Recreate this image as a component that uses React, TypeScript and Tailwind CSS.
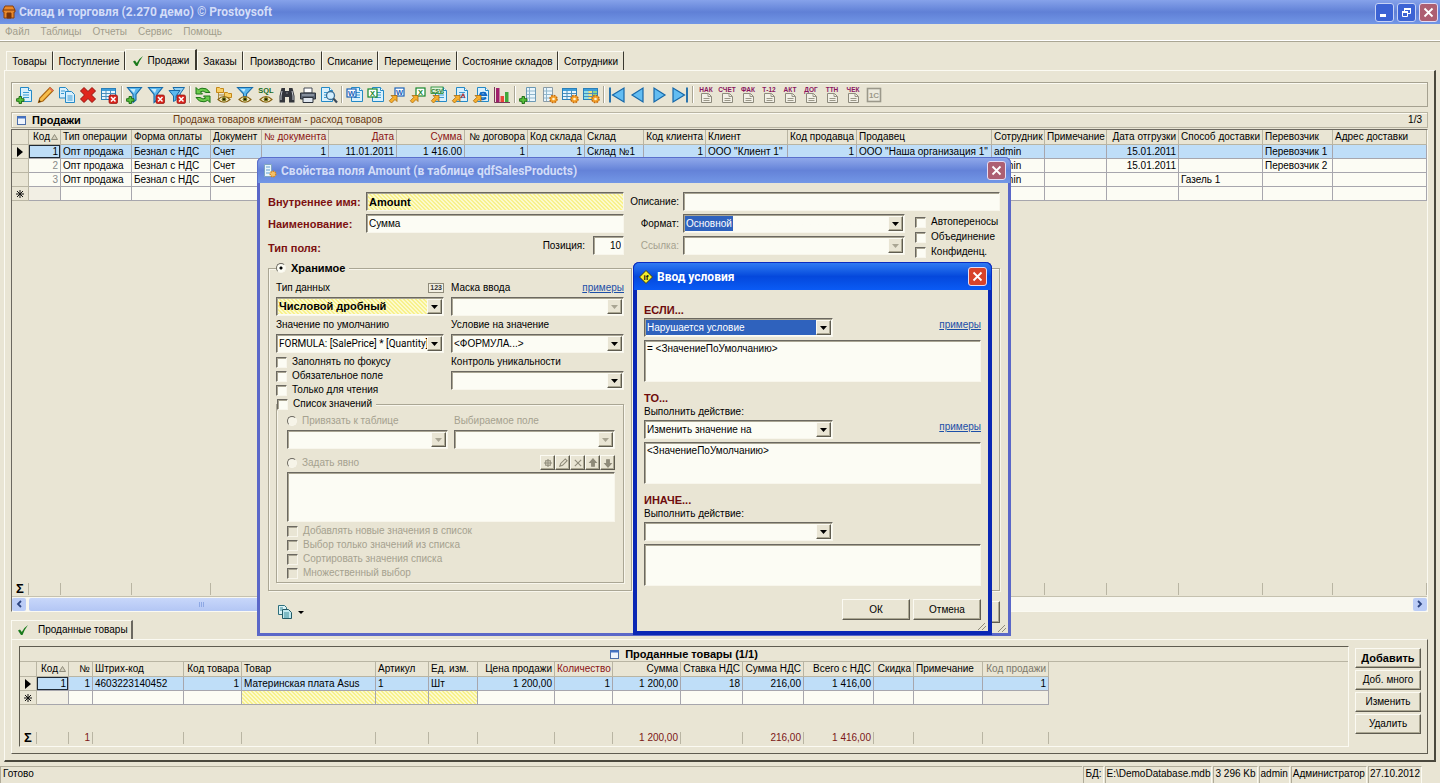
import { useId, useState } from 'react';
import type { ReactNode } from 'react';

interface Column {
  title: string;
  width: string;
  align?: 'right';
  tone?: 'red' | 'gray';
}

const salesColumns: Column[] = [
  { title: 'Код', width: 'w-[32px]', align: 'right' },
  { title: 'Тип операции', width: 'w-[71px]' },
  { title: 'Форма оплаты', width: 'w-[79px]' },
  { title: 'Документ', width: 'w-[51px]' },
  { title: '№ документа', width: 'w-[67px]', align: 'right', tone: 'red' },
  { title: 'Дата', width: 'w-[68px]', align: 'right', tone: 'red' },
  { title: 'Сумма', width: 'w-[68px]', align: 'right', tone: 'red' },
  { title: '№ договора', width: 'w-[63px]', align: 'right' },
  { title: 'Код склада', width: 'w-[57px]', align: 'right' },
  { title: 'Склад', width: 'w-[59px]' },
  { title: 'Код клиента', width: 'w-[62px]', align: 'right' },
  { title: 'Клиент', width: 'w-[82px]' },
  { title: 'Код продавца', width: 'w-[69px]', align: 'right' },
  { title: 'Продавец', width: 'w-[135px]' },
  { title: 'Сотрудник', width: 'w-[53px]' },
  { title: 'Примечание', width: 'w-[62px]' },
  { title: 'Дата отгрузки', width: 'w-[72px]', align: 'right' },
  { title: 'Способ доставки', width: 'w-[84px]' },
  { title: 'Перевозчик', width: 'w-[70px]' },
  { title: 'Адрес доставки', width: 'w-auto' }
];

const salesRows: string[][] = [
  ['1', 'Опт продажа', 'Безнал с НДС', 'Счет', '1', '11.01.2011', '1 416.00', '1', '1', 'Склад №1', '1', 'ООО "Клиент 1"', '1', 'ООО "Наша организация 1"', 'admin', '', '15.01.2011', '', 'Перевозчик 1', ''],
  ['2', 'Опт продажа', 'Безнал с НДС', 'Счет', '', '', '', '', '', '', '', '', '', '', 'admin', '', '15.01.2011', '', 'Перевозчик 2', ''],
  ['3', 'Опт продажа', 'Безнал с НДС', 'Счет', '', '', '', '', '', '', '', '', '', '', 'admin', '', '', 'Газель 1', '', '']
];

const goodsColumns: Column[] = [
  { title: 'Код', width: 'w-[32px]', align: 'right' },
  { title: '№', width: 'w-[24px]', align: 'right' },
  { title: 'Штрих-код', width: 'w-[91px]' },
  { title: 'Код товара', width: 'w-[58px]', align: 'right' },
  { title: 'Товар', width: 'w-[134px]' },
  { title: 'Артикул', width: 'w-[53px]' },
  { title: 'Ед. изм.', width: 'w-[49px]' },
  { title: 'Цена продажи', width: 'w-[77px]', align: 'right' },
  { title: 'Количество', width: 'w-[58px]', align: 'right', tone: 'red' },
  { title: 'Сумма', width: 'w-[68px]', align: 'right' },
  { title: 'Ставка НДС', width: 'w-[62px]', align: 'right' },
  { title: 'Сумма НДС', width: 'w-[61px]', align: 'right' },
  { title: 'Всего с НДС', width: 'w-[70px]', align: 'right' },
  { title: 'Скидка', width: 'w-[40px]', align: 'right' },
  { title: 'Примечание', width: 'w-[69px]' },
  { title: 'Код продажи', width: 'w-[66px]', align: 'right', tone: 'gray' }
];

const goodsRows: string[][] = [
  ['1', '1', '4603223140452', '1', 'Материнская плата Asus', '1', 'Шт', '1 200,00', '1', '1 200,00', '18', '216,00', '1 416,00', '', '', '1']
];

const goodsTotals = ['', '1', '', '', '', '', '', '', '', '1 200,00', '', '216,00', '1 416,00', '', '', ''];

const tabs = [
  { title: 'Товары', width: 'w-[47px]' },
  { title: 'Поступление', width: 'w-[72px]' },
  { title: 'Продажи', width: 'w-[72px]' },
  { title: 'Заказы', width: 'w-[46px]' },
  { title: 'Производство', width: 'w-[79px]' },
  { title: 'Списание', width: 'w-[56px]' },
  { title: 'Перемещение', width: 'w-[79px]' },
  { title: 'Состояние складов', width: 'w-[101px]' },
  { title: 'Сотрудники', width: 'w-[66px]' }
];

const sunken = 'border border-t-[#6b6860] border-l-[#6b6860] border-r-[#f8f6ec] border-b-[#f8f6ec] shadow-[inset_1px_1px_0_#a9a593]';
const raised = 'border border-t-[#fbfaf2] border-l-[#fbfaf2] border-r-[#5f5c50] border-b-[#5f5c50] shadow-[inset_-1px_-1px_0_#aca893]';
const yellow = 'bg-[linear-gradient(45deg,#f8f18c_25%,#fcfacc_25%_50%,#f8f18c_50%_75%,#fcfacc_75%)] bg-[length:4px_4px]';
const bold = 'text-[11px] font-bold';

/* ---------- icon parts ---------- */

function Svg({ children }: { children: ReactNode }) {
  return (
    <svg viewBox="0 0 18 18" className="h-[18px] w-[18px]" aria-hidden="true">
      {children}
    </svg>
  );
}

function Page({ x = 3, y = 1 }: { x?: number; y?: number }) {
  return (
    <g transform={`translate(${x} ${y})`}>
      <path d="M.5 .5h8l3 3v11H.5z" fill="#d9f0fc" stroke="#2489c6" />
      <path d="M8.500 .5v3h3" fill="#fff" stroke="#2489c6" />
      <path d="M3 5.500h6M3 8h6M3 10.500h6" stroke="#3a9bd4" />
    </g>
  );
}

function RedBadge() {
  return (
    <g>
      <rect x="9" y="9" width="8.500" height="8.500" rx="1.500" fill="#d8241c" stroke="#8e100c" strokeWidth=".7" />
      <path d="M11 11l4.500 4.500M15.500 11L11 15.500" stroke="#fff" strokeWidth="1.500" />
    </g>
  );
}

function Plus() {
  return (
    <path d="M3 10.500h2.500v2.200H8v2.600H5.500v2.200H3v-2.200H.6v-2.600H3z" fill="#58c23c" stroke="#17660f" strokeWidth=".9" />
  );
}

function Gear() {
  return (
    <g>
      <circle cx="13.500" cy="13" r="3.600" fill="#f3a12b" stroke="#c56a0c" strokeWidth="1.400" strokeDasharray="1.700 1.100" />
      <circle cx="13.500" cy="13" r="1.300" fill="#fff3d6" />
    </g>
  );
}

function Eye() {
  return (
    <g>
      <path d="M3 13.500q6-6 12 0q-6 5.500-12 0z" fill="#f6ecc8" stroke="#8a6414" strokeWidth="1.100" />
      <circle cx="9" cy="13.300" r="2.300" fill="#7c7a1c" />
      <circle cx="9" cy="13.300" r="1" fill="#151505" />
    </g>
  );
}

function Shortcut() {
  return (
    <path d="M3 9.500h6v6l-2-2-3.500 3.500-2.200-2.200L4.800 11.300z" fill="#f7b02e" stroke="#a86a0c" strokeWidth=".8" />
  );
}

function Funnel() {
  return (
    <g>
      <path d="M1.500 1.500h14L10 8.500V14l-3 2.500v-8z" fill="#5cb8ee" stroke="#176aa8" strokeWidth="1.100" />
      <path d="M4 3h5.500L8 7z" fill="#c8ebfd" />
    </g>
  );
}

function AppLetter({ x = 1, y = 3, letter, color }: { x?: number; y?: number; letter: string; color: string }) {
  return (
    <g>
      <rect x={x} y={y} width="9" height="8" fill="#fff" stroke={color} strokeWidth="1.200" />
      <text x={x + 4.5} y={y + 6.7} fontSize="7.500" fontWeight="bold" textAnchor="middle" fill={color}>
        {letter}
      </text>
    </g>
  );
}

function TableGrid() {
  return (
    <g>
      <rect x="1.500" y="2.500" width="14" height="11" fill="#e6f5fd" stroke="#2b7fb8" />
      <path d="M2 4h13" stroke="#3d9fdc" strokeWidth="2" />
      <path d="M2 7.500h13M2 10.500h13M6 4v9M10.500 4v9" stroke="#4b8fbd" />
    </g>
  );
}

function Report({ text }: { text: string }) {
  return (
    <Svg>
      <text x="9" y="6" fontSize="6.500" fontWeight="bold" textAnchor="middle" fill="#8a1560">
        {text}
      </text>
      <path d="M4.500 7.500h7l3 3v6h-10z" fill="#f2f0e6" stroke="#8d8a7c" />
      <path d="M11 7.500v3h3.500M6.500 12.500h6M6.500 14.500h6" fill="none" stroke="#9a9788" />
    </Svg>
  );
}

const toolbar: { label: string; icon: ReactNode }[][] = [
  [
    { label: 'Добавить', icon: <Svg><Page x={4} /><Plus /></Svg> },
    {
      label: 'Изменить',
      icon: (
        <Svg>
          <path d="M1.500 16.500l1.300-4.500L13 1.500l3.200 3L6 15z" fill="#f7bd4a" stroke="#a9640f" strokeWidth="1.100" />
          <path d="M12 2.500l3.200 3 1-1.200-3-2.800z" fill="#e56a5a" />
          <path d="M1.500 16.500l.8-2.600 1.700 1.700z" fill="#3d2a0a" />
        </Svg>
      )
    },
    {
      label: 'Копировать',
      icon: (
        <Svg>
          <path d="M1.500 1.500h6l2.500 2.500v8h-8.500z" fill="#d9f0fc" stroke="#2489c6" />
          <path d="M7.500 5.500h6l3 3v8h-9z" fill="#d9f0fc" stroke="#2489c6" />
          <path d="M3 5h4M3 7.500h3M9.500 10h5M9.500 12h5M9.500 14h5" stroke="#3a9bd4" />
        </Svg>
      )
    },
    {
      label: 'Удалить',
      icon: (
        <Svg>
          <path d="M5 1.500l4 4 4-4 3.500 3.500-4 4 4 4L13 16.500l-4-4-4 4L1.500 13l4-4-4-4z" fill="#e0261d" stroke="#940f0a" />
        </Svg>
      )
    },
    { label: 'Очистить таблицу', icon: <Svg><TableGrid /><RedBadge /></Svg> }
  ],
  [
    { label: 'Добавить фильтр', icon: <Svg><Funnel /><Plus /></Svg> },
    { label: 'Снять фильтр', icon: <Svg><Funnel /><RedBadge /></Svg> },
    {
      label: 'Снять все фильтры',
      icon: (
        <Svg>
          <path d="M5 1.500h11.500L12 8v4H9V8z" fill="#8fd0f5" stroke="#176aa8" />
          <path d="M1 4.500h11L8 10v4l-2.500 1.500V10z" fill="#5cb8ee" stroke="#176aa8" />
          <RedBadge />
        </Svg>
      )
    }
  ],
  [
    {
      label: 'Обновить',
      icon: (
        <Svg>
          <path d="M2 1.500v6.500h6.500L6.300 5.800Q9 4 12 6.500h4Q13 1.500 8 2.200 6 2.500 4.300 3.800z" fill="#6ccc4c" stroke="#1d7416" />
          <path d="M16 16.500V10H9.500l2.200 2.200Q9 14 6 11.500H2Q5 16.500 10 15.800 12 15.500 13.700 14.200z" fill="#6ccc4c" stroke="#1d7416" />
        </Svg>
      )
    },
    {
      label: 'Дерево',
      icon: (
        <Svg>
          <path d="M1.500 1.500h3l1 1h3v4h-7zM9.500 6.500h3l1 1h3v4h-7z" fill="#f8cf66" stroke="#c48718" />
          <path d="M3.500 7v7H8M3.500 9h6" fill="none" stroke="#a98b42" />
          <Eye />
        </Svg>
      )
    },
    {
      label: 'Показать фильтр',
      icon: (
        <Svg>
          <path d="M1.500 1.500h15L10.500 8v3h-3V8z" fill="#5cb8ee" stroke="#176aa8" strokeWidth="1.100" />
          <path d="M4.500 3h5L8 6z" fill="#c8ebfd" />
          <Eye />
        </Svg>
      )
    },
    {
      label: 'SQL',
      icon: (
        <Svg>
          <text x="9" y="7" fontSize="7.500" fontWeight="bold" textAnchor="middle" fill="#1c6b1c">SQL</text>
          <Eye />
        </Svg>
      )
    },
    {
      label: 'Поиск',
      icon: (
        <Svg>
          <path d="M3.500 2h3.500v3h4V2h3.500l2 8v6.500h-5.500V11h-4v5.500H1.500V10z" fill="#33363c" />
          <path d="M4 5l-1 5v4M14 5l1 5v4M8.500 7h1" stroke="#c2c6cc" fill="none" />
        </Svg>
      )
    },
    {
      label: 'Печать',
      icon: (
        <Svg>
          <path d="M5 2h8v5H5z" fill="#fff" stroke="#444b55" />
          <path d="M1.500 7h15v6h-15z" fill="#5a6472" stroke="#2c323b" />
          <path d="M4 11.500h10v5H4z" fill="#dfe6ee" stroke="#2c323b" />
          <path d="M3 9h12" stroke="#aeb8c5" />
        </Svg>
      )
    },
    {
      label: 'Просмотр',
      icon: (
        <Svg>
          <Page x={1} />
          <circle cx="10.500" cy="9.500" r="4" fill="#d3efff" stroke="#3c6f95" strokeWidth="1.300" />
          <path d="M13.300 12.500l3.700 4" stroke="#3a4a5a" strokeWidth="2.200" />
        </Svg>
      )
    }
  ],
  [
    { label: 'Документ Word', icon: <Svg><Page x={5} /><AppLetter letter="W" color="#1b62b8" /></Svg> },
    { label: 'Документ Excel', icon: <Svg><Page x={5} /><AppLetter letter="X" color="#17862b" /></Svg> },
    { label: 'Экспорт в Word', icon: <Svg><AppLetter x={7} y={2} letter="W" color="#1b62b8" /><Shortcut /></Svg> },
    { label: 'Экспорт в Excel', icon: <Svg><AppLetter x={7} y={2} letter="X" color="#17862b" /><Shortcut /></Svg> },
    {
      label: 'Экспорт в CSV',
      icon: (
        <Svg>
          <Page x={5} />
          <rect x="1" y="1" width="12" height="6.500" fill="#dff3d8" stroke="#17862b" strokeWidth=".8" />
          <text x="7" y="6.500" fontSize="5.500" fontWeight="bold" textAnchor="middle" fill="#17701f">CSV</text>
          <Shortcut />
        </Svg>
      )
    },
    {
      label: 'Экспорт в текст',
      icon: (
        <Svg>
          <Page x={5} />
          <path d="M10 12l2-4 2 4" stroke="#b4323a" fill="none" strokeWidth="1.200" />
          <Shortcut />
        </Svg>
      )
    },
    {
      label: 'Экспорт в HTML',
      icon: (
        <Svg>
          <Page x={5} />
          <path d="M14 11.500a3.300 3.300 0 1 1 .3-2.300H8" stroke="#0f66c4" fill="none" strokeWidth="1.800" />
          <Shortcut />
        </Svg>
      )
    },
    {
      label: 'Диаграмма',
      icon: (
        <Svg>
          <path d="M1.500 1v15.500h15.500" stroke="#7a3a58" fill="none" />
          <path d="M3 2h3.500v14H3z" fill="#a0206c" />
          <path d="M7.500 10H11v6H7.500z" fill="#e8473a" />
          <path d="M12 6h3.500v10H12z" fill="#3fa83a" />
        </Svg>
      )
    }
  ],
  [
    { label: 'Добавить поле', icon: <Svg><path d="M7.500 1.500h9v14h-9z" fill="#eaf6fc" stroke="#6b99b5" /><path d="M10.500 2v13M8 5h8M8 8.500h8M8 12h8" stroke="#8fb6cc" /><Plus /></Svg> },
    { label: 'Свойства поля', icon: <Svg><path d="M3.500 1.500h9v14h-9z" fill="#eaf6fc" stroke="#8a9ba6" /><path d="M6.500 2v13M4 5h8M4 8.500h8M4 12h8" stroke="#8fb6cc" /><Gear /></Svg> },
    { label: 'Свойства таблицы', icon: <Svg><TableGrid /><Gear /></Svg> },
    { label: 'Цвета таблицы', icon: <Svg><TableGrid /><path d="M2 5h4v8H2z" fill="#8fe0e8" /><path d="M6.500 5H10v8H6.500z" fill="#f2e27a" /><path d="M11 5h4v8h-4z" fill="#8ad68a" /><path d="M2 7.500h13M2 10.500h13" stroke="#4b8fbd" /><Gear /></Svg> }
  ],
  [
    { label: 'Первая запись', icon: <Svg><path d="M2 1.500v15" stroke="#1667a8" strokeWidth="1.800" /><path d="M16 2v14L4.500 9z" fill="#63bdf2" stroke="#1667a8" strokeWidth="1.200" /></Svg> },
    { label: 'Предыдущая запись', icon: <Svg><path d="M14 2v14L3 9z" fill="#63bdf2" stroke="#1667a8" strokeWidth="1.200" /></Svg> },
    { label: 'Следующая запись', icon: <Svg><path d="M4 2v14l11-7z" fill="#63bdf2" stroke="#1667a8" strokeWidth="1.200" /></Svg> },
    { label: 'Последняя запись', icon: <Svg><path d="M16 1.500v15" stroke="#1667a8" strokeWidth="1.800" /><path d="M2 2v14l11.500-7z" fill="#63bdf2" stroke="#1667a8" strokeWidth="1.200" /></Svg> }
  ],
  [
    { label: 'Накладная', icon: <Report text="НАК" /> },
    { label: 'Счет', icon: <Report text="СЧЕТ" /> },
    { label: 'Счет-фактура', icon: <Report text="ФАК" /> },
    { label: 'Форма Т-12', icon: <Report text="Т-12" /> },
    { label: 'Акт', icon: <Report text="АКТ" /> },
    { label: 'Договор', icon: <Report text="ДОГ" /> },
    { label: 'Транспортная накладная', icon: <Report text="ТТН" /> },
    { label: 'Чек', icon: <Report text="ЧЕК" /> },
    {
      label: '1С',
      icon: (
        <Svg>
          <rect x="2.500" y="2.500" width="13" height="13" fill="#eceadd" stroke="#9b988a" strokeWidth="1.600" />
          <text x="9" y="12" fontSize="8" fontWeight="bold" textAnchor="middle" fill="#9b988a">1С</text>
        </Svg>
      )
    }
  ]
];

function CheckMark() {
  return (
    <svg viewBox="0 0 12 12" className="h-3 w-3 shrink-0" aria-hidden="true">
      <path d="M1 6.500l2-1 1.800 2.500Q7 3.500 11 1 7.500 5.500 5.500 11H4z" fill="#1a7a1c" />
    </svg>
  );
}

function WindowIcon() {
  return (
    <svg viewBox="0 0 9 9" className="h-[9px] w-[9px] shrink-0" aria-hidden="true">
      <rect x=".5" y=".5" width="8" height="8" fill="#eef4fd" stroke="#4c6ea8" />
      <path d="M0 1.500h9" stroke="#4372c4" strokeWidth="2" />
    </svg>
  );
}

/* ---------- form controls ---------- */

interface SelectBoxProps {
  id?: string;
  labelledBy?: string;
  value?: string;
  disabled?: boolean;
  tone?: string;
  className?: string;
}

function SelectBox({ id, labelledBy, value = '', disabled, tone = 'bg-[#fcfcf4] text-black', className = '' }: SelectBoxProps) {
  return (
    <div className={`relative flex h-[19px] bg-[#fcfcf4] ${sunken} ${className}`}>
      <select
        id={id}
        aria-labelledby={labelledBy}
        disabled={disabled}
        className={`m-px min-w-0 flex-1 appearance-none pr-[15px] pl-px leading-[15px] outline-none ${tone}`}
      >
        <option>{value}</option>
      </select>
      <span className={`pointer-events-none absolute inset-y-px right-px flex w-[15px] items-center justify-center bg-[#e9e5d4] ${raised}`}>
        <svg viewBox="0 0 7 4" className="h-1 w-[7px]" aria-hidden="true">
          <path d="M0 0h7L3.500 4z" fill={disabled ? '#a9a593' : '#000'} />
        </svg>
      </span>
    </div>
  );
}

function Check({ label, disabled }: { label: string; disabled?: boolean }) {
  return (
    <label className={`flex h-[14px] items-center gap-[5px] whitespace-nowrap ${disabled ? 'text-[#a5a18f]' : ''}`}>
      <input
        type="checkbox"
        disabled={disabled}
        className={`h-[11px] w-[11px] shrink-0 appearance-none ${sunken} ${disabled ? 'bg-[#e9e5d4]' : 'bg-[#fcfcf4] checked:bg-[#4a4a44]'}`}
      />
      {label}
    </label>
  );
}

function Radio({ label, name, checked, strong, disabled }: { label: string; name: string; checked?: boolean; strong?: boolean; disabled?: boolean }) {
  return (
    <label className={`flex h-[14px] items-center gap-[5px] whitespace-nowrap ${strong ? bold : ''} ${disabled ? 'text-[#a5a18f]' : ''}`}>
      <input
        type="radio"
        name={name}
        defaultChecked={checked}
        disabled={disabled}
        className="h-[10px] w-[10px] shrink-0 appearance-none rounded-full border border-t-[#6b6860] border-r-[#f8f6ec] border-b-[#f8f6ec] border-l-[#6b6860] bg-[#f6f4e8] checked:bg-[radial-gradient(circle,#000_0_1px,#fcfcf4_2px)]"
      />
      {label}
    </label>
  );
}

function PushButton({ children, label, className = '', onClick }: { children?: ReactNode; label?: string; className?: string; onClick?: () => void }) {
  return (
    <button
      type="button"
      aria-label={label}
      onClick={onClick}
      className={`flex items-center justify-center bg-[#e9e5d4] whitespace-nowrap ${raised} ${className}`}
    >
      {children}
    </button>
  );
}

function CloseButton({ faded, onClick }: { faded?: boolean; onClick?: () => void }) {
  return (
    <button
      type="button"
      aria-label="Закрыть"
      onClick={onClick}
      className={`flex h-[19px] w-[19px] items-center justify-center rounded-[3px] border border-[#e4dcf4] ${faded ? 'bg-[#ad5f72]' : 'bg-[#d8432a]'}`}
    >
      <svg viewBox="0 0 11 11" className="h-[11px] w-[11px]" aria-hidden="true">
        <path d="M1.500 1.500l8 8M9.500 1.500l-8 8" stroke="#fff" strokeWidth="1.800" />
      </svg>
    </button>
  );
}

function Grip() {
  return (
    <svg viewBox="0 0 10 8" className="absolute right-px bottom-px h-2 w-[10px]" aria-hidden="true">
      <path d="M1 8l7-7M5 8l4-4" stroke="#8f8b7a" />
    </svg>
  );
}

/* ---------- data grid ---------- */

function toneClass(column: Column) {
  if (column.tone === 'red') return 'text-[#8b1414]';
  if (column.tone === 'gray') return 'text-[#7a776a]';
  return 'text-black';
}

function GridCols({ columns }: { columns: Column[] }) {
  return (
    <colgroup>
      <col className="w-[17px]" />
      {columns.map((column) => (
        <col key={column.title} className={column.width} />
      ))}
    </colgroup>
  );
}

interface GridProps {
  columns: Column[];
  rows: string[][];
  yellowFrom?: number;
  yellowTo?: number;
  grayColumn?: number;
  className: string;
}

function DataGrid({ columns, rows, yellowFrom = -1, yellowTo = -2, grayColumn = -1, className }: GridProps) {
  const cell = 'h-[14px] overflow-hidden border-r border-b border-[#a7a6ad] px-[2px] leading-[13px] whitespace-nowrap';

  return (
    <table className={`table-fixed border-separate border-spacing-0 ${className}`}>
      <GridCols columns={columns} />
      <thead>
        <tr>
          <th className="h-[15px] border-r border-b border-[#b9b5a3] leading-[14px]"></th>
          {columns.map((column, idx) => (
            <th
              key={column.title}
              className={`h-[15px] overflow-hidden border-r border-b border-[#b9b5a3] px-[2px] leading-[14px] font-normal whitespace-nowrap ${column.align === 'right' ? 'text-right' : 'text-left'} ${toneClass(column)}`}
            >
              {column.title}
              {idx === 0 && (
                <svg viewBox="0 0 7 6" className="ml-px inline h-[6px] w-[7px]" aria-hidden="true">
                  <path d="M3.500 .5l3 5h-6z" fill="#d5d1bf" stroke="#8f8b7a" />
                </svg>
              )}
            </th>
          ))}
        </tr>
      </thead>
      <tbody>
        {rows.map((row, rowIdx) => (
          <tr key={row[0]} className={rowIdx === 0 ? 'bg-[#bfdef8]' : 'bg-[#fcfcf4]'}>
            <td className="h-[14px] border-r border-b border-[#b9b5a3] bg-[#e9e5d4] leading-[13px]">
              {rowIdx === 0 && (
                <svg viewBox="0 0 6 10" className="mx-auto h-[10px] w-[6px]" aria-hidden="true">
                  <path d="M0 0l6 5-6 5z" fill="#000" />
                </svg>
              )}
            </td>
            {row.map((value, idx) => (
              <td
                key={idx}
                className={`${cell} ${columns[idx].align === 'right' ? 'text-right' : ''} ${idx === 0 && rowIdx > 0 ? 'text-[#8a8a8a]' : ''} ${idx === 0 && rowIdx === 0 ? 'shadow-[inset_0_0_0_1px_#1f2a36]' : ''}`}
              >
                {value}
              </td>
            ))}
          </tr>
        ))}
        <tr className="bg-[#fcfcf4]">
          <td className="h-[14px] border-r border-b border-[#b9b5a3] bg-[#e9e5d4]">
            <svg viewBox="0 0 8 8" className="mx-auto h-2 w-2" aria-hidden="true">
              <path d="M4 0v8M0 4h8M1 1l6 6M7 1L1 7" stroke="#111" />
            </svg>
          </td>
          {columns.map((column, idx) => (
            <td
              key={column.title}
              className={`${cell} ${idx >= yellowFrom && idx <= yellowTo ? yellow : ''} ${idx === 0 || idx === grayColumn ? 'bg-[#f2efe4]' : ''}`}
            ></td>
          ))}
        </tr>
      </tbody>
    </table>
  );
}

function TotalsRow({ columns, totals, className }: { columns: Column[]; totals?: string[]; className: string }) {
  return (
    <table className={`table-fixed border-separate border-spacing-0 ${className}`}>
      <GridCols columns={columns} />
      <tbody>
        <tr>
          <td className="h-[12px] border-r border-[#b9b5a3] text-center text-[13px] leading-[12px] font-bold">Σ</td>
          {columns.map((column, idx) => (
            <td key={column.title} className="h-[12px] border-r border-[#b9b5a3] px-[2px] text-right leading-[12px] text-[#7c1616]">
              {totals ? totals[idx] : ''}
            </td>
          ))}
        </tr>
      </tbody>
    </table>
  );
}

/* ---------- dialogs ---------- */

function FieldDialog() {
  const id = useId();
  const label = 'block h-[14px] whitespace-nowrap';
  const input = `h-[19px] min-w-0 flex-1 bg-[#fcfcf4] px-[2px] outline-none ${sunken}`;

  return (
    <section className="absolute top-[157px] left-[257px] flex w-[754px] flex-col rounded-t-md border-3 border-t-0 border-[#5a67c8] bg-[#e9e5d4]">
      <header className="-mx-[3px] flex h-[26px] items-center gap-1 rounded-t-md border-x border-t border-[#5a70cc] bg-linear-to-b from-[#8fa8ea] via-[#6482d8] to-[#7397e6] pr-1 pl-[5px]">
        <svg viewBox="0 0 14 14" className="h-[14px] w-[14px]" aria-hidden="true">
          <path d="M1.500 .5h7v12h-7z" fill="#eaf6fc" stroke="#7fa6c0" />
          <path d="M3 3h4M3 6h4M3 9h4" stroke="#5f9fd0" />
          <circle cx="10" cy="10" r="2.800" fill="#f6c166" stroke="#d8861c" strokeWidth="1.400" strokeDasharray="1.500 1" />
        </svg>
        <h2 className="flex-1 font-[Roboto,sans-serif] text-[12px] font-bold text-[#d3ddf8]">
          Свойства поля Amount (в таблице qdfSalesProducts)
        </h2>
        <CloseButton faded />
      </header>

      <div className="px-2 pt-[9px]">
        <div className="flex pb-[2px]">
          <div className="flex w-[356px] shrink-0 flex-col gap-[3px]">
            <div className="flex items-center">
              <label htmlFor={`${id}-name`} className={`w-[98px] text-[#7c1010] ${bold}`}>Внутреннее имя:</label>
              <input id={`${id}-name`} defaultValue="Amount" className={`h-[19px] min-w-0 flex-1 px-[2px] outline-none ${bold} ${yellow} ${sunken}`} />
            </div>
            <div className="flex items-center">
              <label htmlFor={`${id}-title`} className={`w-[98px] text-[#7c1010] ${bold}`}>Наименование:</label>
              <input id={`${id}-title`} defaultValue="Сумма" className={input} />
            </div>
            <div className="flex items-center">
              <span className={`flex-1 self-end text-[#7c1010] ${bold}`}>Тип поля:</span>
              <label htmlFor={`${id}-pos`} className="mr-2">Позиция:</label>
              <input id={`${id}-pos`} defaultValue="10" className={`h-[19px] w-[31px] bg-[#fcfcf4] px-[2px] text-right outline-none ${sunken}`} />
            </div>
          </div>

          <div className="flex min-w-0 flex-1 flex-col gap-[3px]">
            <div className="flex items-center">
              <label htmlFor={`${id}-desc`} className="w-[59px] pr-1 text-right">Описание:</label>
              <input id={`${id}-desc`} className={input} />
            </div>
            <div className="flex">
              <div className="flex flex-col gap-[3px]">
                <div className="flex items-center">
                  <label htmlFor={`${id}-format`} className="w-[59px] pr-1 text-right">Формат:</label>
                  <SelectBox id={`${id}-format`} value="Основной" tone="bg-linear-to-r from-[#2f62bd] from-[48px] to-[#fcfcf4] to-[48px] text-white" className="w-[222px]" />
                </div>
                <div className="flex items-center">
                  <label htmlFor={`${id}-link`} className="w-[59px] pr-1 text-right text-[#a5a18f]">Ссылка:</label>
                  <SelectBox id={`${id}-link`} disabled className="w-[222px]" />
                </div>
              </div>
              <div className="flex flex-col gap-px pt-px pl-[10px]">
                <Check label="Автопереносы" />
                <Check label="Объединение" />
                <Check label="Конфиденц." />
              </div>
            </div>
          </div>
        </div>

        <div className="flex gap-[5px]">
          <fieldset className="w-[364px] min-w-0 border border-[#aaa694] px-[7px] pb-[7px] shadow-[inset_1px_1px_0_#f8f6ec,1px_1px_0_#f8f6ec]">
            <legend className="bg-[#e9e5d4] pr-1">
              <Radio label="Хранимое" name="kind" checked strong />
            </legend>
            <div className="flex gap-[7px] pt-[6px]">
              <div className="flex w-[168px] flex-col gap-[2px]">
                <div className="flex items-center justify-between">
                  <label htmlFor={`${id}-type`} className={label}>Тип данных</label>
                  <span className="border border-[#8f8b7a] bg-[#f2efe2] px-px text-[7px] leading-[8px] font-bold text-[#333]">123</span>
                </div>
                <SelectBox id={`${id}-type`} value="Числовой дробный" tone={`${yellow} ${bold}`} />
                <label htmlFor={`${id}-default`} className={label}>Значение по умолчанию</label>
                <SelectBox id={`${id}-default`} value="FORMULA: [SalePrice] * [Quantity]" tone="bg-[#fcfcf4] font-[Roboto,sans-serif] text-black" />
                <div>
                  <Check label="Заполнять по фокусу" />
                  <Check label="Обязательное поле" />
                  <Check label="Только для чтения" />
                </div>
              </div>
              <div className="flex flex-1 flex-col gap-[2px]">
                <div className="flex justify-between">
                  <label htmlFor={`${id}-mask`} className={label}>Маска ввода</label>
                  <a href="#mask" className="text-[#1c4fa8] underline">примеры</a>
                </div>
                <SelectBox id={`${id}-mask`} disabled />
                <label htmlFor={`${id}-rule`} className={label}>Условие на значение</label>
                <SelectBox id={`${id}-rule`} value="<ФОРМУЛА...>" />
                <label htmlFor={`${id}-unique`} className={label}>Контроль уникальности</label>
                <SelectBox id={`${id}-unique`} />
              </div>
            </div>

            <fieldset className="min-w-0 border border-[#aaa694] shadow-[inset_1px_1px_0_#f8f6ec,1px_1px_0_#f8f6ec]">
              <legend className="bg-[#e9e5d4] pr-1">
                <Check label="Список значений" />
              </legend>
              <div className="flex flex-col gap-[2px] pt-[3px] pr-2 pl-[10px]">
                <div className="flex gap-[6px]">
                  <div className="flex flex-1 flex-col gap-[2px]">
                    <div id={`${id}-table`}>
                      <Radio label="Привязать к таблице" name="list" disabled />
                    </div>
                    <SelectBox labelledBy={`${id}-table`} disabled />
                  </div>
                  <div className="flex flex-1 flex-col gap-[2px]">
                    <label htmlFor={`${id}-field`} className={`${label} text-[#a5a18f]`}>Выбираемое поле</label>
                    <SelectBox id={`${id}-field`} disabled />
                  </div>
                </div>
                <div className="flex items-end justify-between pt-1">
                  <Radio label="Задать явно" name="list" disabled />
                  <div className="flex">
                    {['M5.500 1v9M1 5.500h9M3 3h5v5H3z', 'M2 9l1-3 5-5 2 2-5 5z', 'M2 2l7 7M9 2L2 9', 'M5.500 1L9 5H7v4H4V5H2z', 'M5.500 10L2 6h2V2h3v4h2z'].map((d, idx) => (
                      <button
                        key={d}
                        type="button"
                        disabled
                        aria-label={['Добавить', 'Изменить', 'Удалить', 'Вверх', 'Вниз'][idx]}
                        className={`flex h-[15px] w-[15px] items-center justify-center bg-[#e9e5d4] ${raised}`}
                      >
                        <svg viewBox="0 0 11 11" className="h-[10px] w-[10px]" aria-hidden="true">
                          <path d={d} fill={idx > 2 ? '#8f8b7a' : 'none'} stroke="#8f8b7a" strokeWidth="1.200" />
                        </svg>
                      </button>
                    ))}
                  </div>
                </div>
                <textarea aria-label="Задать явно" disabled className={`block h-[50px] w-full resize-none bg-[#fcfcf4] ${sunken}`} />
                <div className="pb-[2px]">
                  <Check label="Добавлять новые значения в список" disabled />
                  <Check label="Выбор только значений из списка" disabled />
                  <Check label="Сортировать значения списка" disabled />
                  <Check label="Множественный выбор" disabled />
                </div>
              </div>
            </fieldset>
          </fieldset>
          <div className="mt-[7px] flex-1 border border-[#aaa694] shadow-[inset_1px_1px_0_#f8f6ec,1px_1px_0_#f8f6ec]"></div>
        </div>
      </div>

      <footer className="flex h-[42px] items-center justify-between px-2">
        <button type="button" aria-label="Копировать" className="flex items-center gap-[6px] pl-[10px]">
          <svg viewBox="0 0 14 14" className="h-[14px] w-[14px]" aria-hidden="true">
            <path d="M.5 .5h6l2 2v7h-8z" fill="#dcf3f6" stroke="#2d6f7c" />
            <path d="M4.500 4.500h6l3 3v6h-9z" fill="#bfe8ee" stroke="#235a66" />
            <path d="M2 3h3M2 5h2M6 8h5M6 10h5M6 12h5" stroke="#3a8c9a" />
          </svg>
          <svg viewBox="0 0 6 3" className="h-[3px] w-[6px]" aria-hidden="true">
            <path d="M0 0h6L3 3z" fill="#000" />
          </svg>
        </button>
        <PushButton label="Отмена" className="h-[22px] w-[68px]" />
      </footer>
      <Grip />
    </section>
  );
}

interface ConditionProps {
  title: string;
  caption?: string;
  value?: string;
  selected?: boolean;
  text: string;
  link?: boolean;
}

function Condition({ title, caption, value, selected, text, link }: ConditionProps) {
  const id = useId();

  return (
    <div className="mb-[9px]">
      <h3 id={`${id}-title`} className={`h-[14px] text-[#6e0c0c] ${bold}`}>{title}</h3>
      {caption && <label htmlFor={`${id}-action`} className="block h-[14px]">{caption}</label>}
      <div className="mt-px mb-[3px] flex justify-between">
        <SelectBox
          id={`${id}-action`}
          labelledBy={caption ? undefined : `${id}-title`}
          value={value}
          tone={selected ? 'bg-[#2f62bd] text-white outline-1 outline-dotted outline-[#e0c070] -outline-offset-1 mr-4' : undefined}
          className="w-[189px]"
        />
        {link && <a href="#examples" className="text-[#1c4fa8] underline">примеры</a>}
      </div>
      <textarea
        aria-labelledby={`${id}-title`}
        defaultValue={text}
        className={`block h-[42px] w-full resize-none bg-[#fcfcf4] px-[2px] py-px outline-none ${sunken}`}
      />
    </div>
  );
}

function ConditionDialog({ onClose }: { onClose: () => void }) {
  return (
    <section className="absolute top-[262px] left-[633px] w-[359px] rounded-t-md border-4 border-t-0 border-[#0a27b4] bg-[#e9e5d4]">
      <header className="-mx-1 flex h-7 items-center gap-1 rounded-t-md border-x border-t border-[#0a2cc0] bg-linear-to-b from-[#2f7af2] via-[#0548dc] to-[#0a5bf5] pr-1 pl-[5px]">
        <svg viewBox="0 0 14 14" className="h-[14px] w-[14px]" aria-hidden="true">
          <path d="M7 .5L13.500 7 7 13.500 .5 7z" fill="#f5ee2a" stroke="#3c3c10" />
          <text x="7" y="10" fontSize="8" fontWeight="bold" textAnchor="middle" fill="#111">if</text>
        </svg>
        <h2 className="flex-1 font-[Roboto,sans-serif] text-[12px] font-bold text-white">Ввод условия</h2>
        <CloseButton onClick={onClose} />
      </header>
      <div className="px-[7px] pt-[13px]">
        <Condition title="ЕСЛИ..." value="Нарушается условие" selected text="= <ЗначениеПоУмолчанию>" link />
        <Condition title="ТО..." caption="Выполнить действие:" value="Изменить значение на" text="<ЗначениеПоУмолчанию>" link />
        <Condition title="ИНАЧЕ..." caption="Выполнить действие:" text="" />
        <div className="flex justify-end gap-[3px] pt-1 pb-[11px]">
          <PushButton className="h-[21px] w-[68px]" onClick={onClose}>ОК</PushButton>
          <PushButton className="h-[21px] w-[68px]" onClick={onClose}>Отмена</PushButton>
        </div>
      </div>
      <Grip />
    </section>
  );
}

/* ---------- main window ---------- */

export default function App() {
  const [activeTab, setActiveTab] = useState('Продажи');
  const [conditionOpen, setConditionOpen] = useState(true);

  return (
    <div className="relative flex min-h-screen flex-col overflow-hidden bg-[#e9e5d4] font-['Liberation_Sans',Arial,sans-serif] text-[10px] leading-[14px] text-black">
      <header className="flex h-6 items-center gap-[3px] bg-linear-to-b from-[#86a2ea] via-[#6080d6] to-[#7296e6] pr-[2px] pl-[2px]">
        <svg viewBox="0 0 14 14" className="h-[14px] w-[14px]" aria-hidden="true">
          <path d="M1 5l2-4h8l2 4v2h-1v6H2V7H1z" fill="#e8892c" stroke="#8a3f0c" />
          <path d="M1 5h12M5 8h4v5H5z" fill="#7a3408" stroke="#7a3408" />
        </svg>
        <h1 className="flex-1 font-[Roboto,sans-serif] text-[12px] font-bold text-[#d3ddf8]">
          Склад и торговля (2.270 демо) © Prostoysoft
        </h1>
        <button type="button" aria-label="Свернуть" className="flex h-[19px] w-[19px] items-end rounded-[3px] border border-[#c6d2f5] bg-[#3c63d4] p-1">
          <span className="h-[3px] w-[6px] bg-white"></span>
        </button>
        <button type="button" aria-label="Восстановить" className="flex h-[19px] w-[19px] items-center justify-center rounded-[3px] border border-[#c6d2f5] bg-[#3c63d4]">
          <svg viewBox="0 0 11 11" className="h-[11px] w-[11px]" aria-hidden="true">
            <path d="M3.500 4V1.500h6v5H7M1.500 5h5v4.500h-5z" fill="none" stroke="#fff" />
            <path d="M3 2h7M1 5h6" stroke="#fff" strokeWidth="2" />
          </svg>
        </button>
        <CloseButton faded />
      </header>

      <nav className="flex h-[17px] items-center gap-[11px] border-b border-white pl-[5px] text-[#a19d8c] shadow-[0_1px_0_#aaa694]">
        {['Файл', 'Таблицы', 'Отчеты', 'Сервис', 'Помощь'].map((item) => (
          <button key={item} type="button">{item}</button>
        ))}
      </nav>

      <div className="flex flex-1 flex-col px-[4px] pt-2">
        <div className="flex items-end pl-[2px]">
          {tabs.map((tab) => (
            <button
              key={tab.title}
              type="button"
              onClick={() => setActiveTab(tab.title)}
              className={`flex items-center justify-center gap-1 border-t border-r border-l border-t-[#fbfaf2] border-l-[#fbfaf2] pt-px whitespace-nowrap ${tab.width} ${tab.title === activeTab ? 'h-[21px] border-r-2 border-r-[#3a382f]' : 'h-[19px] border-r-[#3a382f]'}`}
            >
              {tab.title === activeTab && <CheckMark />}
              {tab.title}
            </button>
          ))}
        </div>

        <main className="flex flex-1 flex-col border border-t-[#fbfaf2] border-r-2 border-b-2 border-l-[#fbfaf2] border-r-[#4a483d] border-b-[#4a483d] px-[6px] pt-[11px] pb-[6px]">
          <div className="flex h-[25px] shrink-0 items-center gap-px border border-[#a5a190] pl-[3px] shadow-[inset_1px_1px_0_#fbfaf2]">
            {toolbar.map((group, idx) => (
              <div key={idx} className="flex items-center gap-px">
                {idx > 0 && (
                  <div className="flex h-[17px] w-1 justify-center">
                    <span className="w-[2px] border-l border-[#aaa694] bg-white"></span>
                  </div>
                )}
                {group.map((item) => (
                  <button key={item.label} type="button" aria-label={item.label} className="flex h-5 w-5 items-center justify-center">
                    {item.icon}
                  </button>
                ))}
              </div>
            ))}
          </div>

          <div className="mt-[5px] flex h-4 shrink-0 items-center border border-[#b9b5a3] px-[5px] shadow-[inset_1px_1px_0_#fbfaf2]">
            <div className={`flex w-[156px] items-center gap-[6px] ${bold}`}>
              <WindowIcon />
              Продажи
            </div>
            <span className="flex-1 text-[#6b3a10]">Продажа товаров клиентам - расход товаров</span>
            <span>1/3</span>
          </div>

          <div className="mt-px flex flex-1 flex-col border border-t-[#6b6860] border-r-[#fbfaf2] border-b-[#fbfaf2] border-l-[#6b6860]">
            <DataGrid columns={salesColumns} rows={salesRows} className="w-full" />
            <div className="flex-1"></div>
            <TotalsRow columns={salesColumns} className="w-full" />
            <div className="mt-px flex h-[15px] items-center gap-[3px] border-t border-[#c5c1af] bg-[#f8f7ef]">
              <button type="button" aria-label="Влево" className="flex h-[13px] w-[14px] items-center justify-center rounded-[2px] bg-[#bccdf6]">
                <svg viewBox="0 0 6 8" className="h-2 w-[6px]" aria-hidden="true">
                  <path d="M5 1L2 4l3 3" fill="none" stroke="#2c4480" strokeWidth="1.800" />
                </svg>
              </button>
              <div className="flex-1">
                <div className="flex h-[13px] w-1/4 items-center justify-center gap-px rounded-[2px] bg-linear-to-b from-[#c8d7fa] to-[#b3c6f4]">
                  <span className="h-[5px] w-px bg-[#8ea8e4]"></span>
                  <span className="h-[5px] w-px bg-[#8ea8e4]"></span>
                  <span className="h-[5px] w-px bg-[#8ea8e4]"></span>
                </div>
              </div>
              <button type="button" aria-label="Вправо" className="flex h-[13px] w-[14px] items-center justify-center rounded-[2px] bg-[#bccdf6]">
                <svg viewBox="0 0 6 8" className="h-2 w-[6px]" aria-hidden="true">
                  <path d="M1 1l3 3-3 3" fill="none" stroke="#2c4480" strokeWidth="1.800" />
                </svg>
              </button>
            </div>
          </div>

          <div className="mt-2 flex">
            <button type="button" className="flex h-[19px] w-[122px] items-center gap-[9px] border-t border-r-2 border-l border-t-[#fbfaf2] border-r-[#6b6860] border-l-[#fbfaf2] pl-[5px] whitespace-nowrap">
              <CheckMark />
              Проданные товары
            </button>
          </div>
          <div className="flex gap-[6px] border border-t-[#fbfaf2] border-r-[#5f5c50] border-b-[#5f5c50] border-l-[#fbfaf2] py-[6px] pr-[6px] pl-[7px]">
            <div className="flex h-[101px] flex-1 flex-col border border-t-[#5f5c50] border-r-[#fbfaf2] border-b-[#fbfaf2] border-l-[#5f5c50] pb-[2px]">
              <div className={`flex h-[15px] items-center justify-center gap-[6px] border-b border-[#b9b5a3] ${bold}`}>
                <WindowIcon />
                Проданные товары (1/1)
              </div>
              <DataGrid columns={goodsColumns} rows={goodsRows} yellowFrom={4} yellowTo={6} grayColumn={15} className="w-[1028px]" />
              <div className="flex-1"></div>
              <TotalsRow columns={goodsColumns} totals={goodsTotals} className="w-[1028px]" />
            </div>
            <div className="flex flex-col gap-[2px] pt-[2px]">
              <PushButton className={`h-5 w-[66px] ${bold}`}>Добавить</PushButton>
              <PushButton className="h-5 w-[66px]">Доб. много</PushButton>
              <PushButton className="h-5 w-[66px]">Изменить</PushButton>
              <PushButton className="h-5 w-[66px]">Удалить</PushButton>
            </div>
          </div>
        </main>
      </div>

      <footer className="mt-1 flex h-[17px] items-stretch gap-px pr-[18px]">
        <span className="flex-1 border-t border-l border-[#b0ac9a] pl-[2px]">Готово</span>
        {['БД:', 'E:\\DemoDatabase.mdb', '3 296 Kb', 'admin', 'Администратор', '27.10.2012'].map((text) => (
          <span key={text} className="border-t border-r border-l border-t-[#b0ac9a] border-r-[#fbfaf2] border-l-[#b0ac9a] px-px whitespace-nowrap">
            {text}
          </span>
        ))}
      </footer>

      <FieldDialog />
      {conditionOpen && <ConditionDialog onClose={() => setConditionOpen(false)} />}
    </div>
  );
}
